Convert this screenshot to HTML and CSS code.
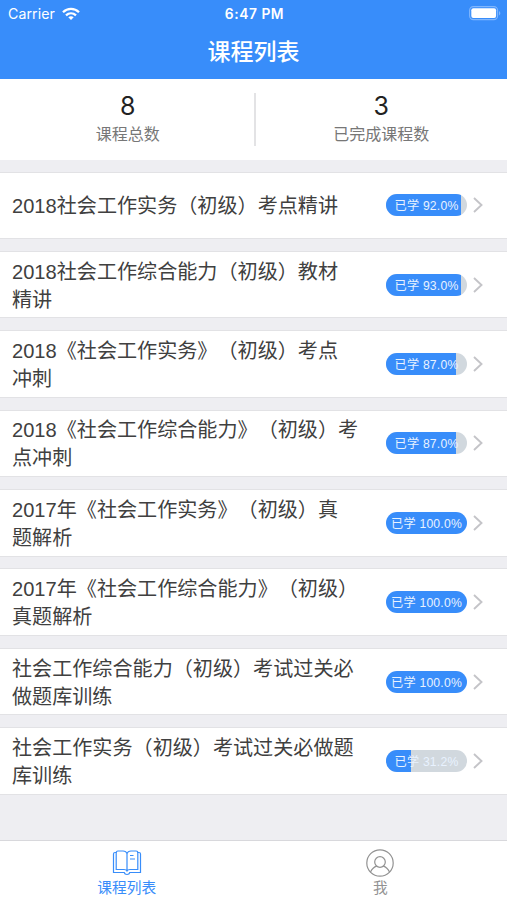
FILE: index.html
```html
<!DOCTYPE html>
<html lang="zh-CN">
<head>
<meta charset="utf-8">
<title>课程列表</title>
<link rel="stylesheet" href="styles.css">
</head>
<body>
<div class="app">
  <header class="header">
    <div class="status">
      <div class="carrier"><span>Carrier</span>
        <svg width="18" height="14" viewBox="0 0 18 14" fill="none" stroke="#fff" stroke-width="2.3"><path d="M1 5.2C5.5.8 12.500.8 17 5.200M4 8.300C6.900 5.600 11.100 5.600 14 8.300"/><path d="M6.300 10.300C7.900 8.900 10.100 8.900 11.700 10.300L9 13Z" fill="#fff" stroke="none"/></svg>
      </div>
      <div class="time">6:47 PM</div>
      <svg class="battery" width="32" height="15" viewBox="0 0 32 15"><rect x=".6" y=".6" width="28" height="13" rx="3.800" fill="none" stroke="#80b6fd" stroke-width="1.100"/><rect x="2.300" y="2.300" width="24.800" height="9.600" rx="2" fill="#fff"/><path d="M30 5v4.500c1.800-.7 1.800-3.800 0-4.500Z" fill="#80b6fd"/></svg>
    </div>
    <h1 class="heading">课程列表</h1>
  </header>
  <section class="stats">
    <div class="stat"><span class="number">8</span><span class="label">课程总数</span></div>
    <div class="stat"><span class="number">3</span><span class="label">已完成课程数</span></div>
  </section>
  <main class="list">
    <article class="card"><h2 class="name">2018社会工作实务（初级）考点精讲</h2><div class="pill"><i class="fill" style="width:92%"></i><span class="learned">已学 92.0%</span></div><svg class="arrow" viewBox="0 0 10 16"><path d="M1 1l7.500 7L1 15"/></svg></article>
    <article class="card"><h2 class="name">2018社会工作综合能力（初级）教材<br>精讲</h2><div class="pill"><i class="fill" style="width:93%"></i><span class="learned">已学 93.0%</span></div><svg class="arrow" viewBox="0 0 10 16"><path d="M1 1l7.500 7L1 15"/></svg></article>
    <article class="card"><h2 class="name">2018《社会工作实务》（初级）考点<br>冲刺</h2><div class="pill"><i class="fill" style="width:87%"></i><span class="learned">已学 87.0%</span></div><svg class="arrow" viewBox="0 0 10 16"><path d="M1 1l7.500 7L1 15"/></svg></article>
    <article class="card"><h2 class="name">2018《社会工作综合能力》（初级）考<br>点冲刺</h2><div class="pill"><i class="fill" style="width:87%"></i><span class="learned">已学 87.0%</span></div><svg class="arrow" viewBox="0 0 10 16"><path d="M1 1l7.500 7L1 15"/></svg></article>
    <article class="card"><h2 class="name">2017年《社会工作实务》（初级）真<br>题解析</h2><div class="pill"><i class="fill" style="width:100%"></i><span class="learned">已学 100.0%</span></div><svg class="arrow" viewBox="0 0 10 16"><path d="M1 1l7.500 7L1 15"/></svg></article>
    <article class="card"><h2 class="name">2017年《社会工作综合能力》（初级）<br>真题解析</h2><div class="pill"><i class="fill" style="width:100%"></i><span class="learned">已学 100.0%</span></div><svg class="arrow" viewBox="0 0 10 16"><path d="M1 1l7.500 7L1 15"/></svg></article>
    <article class="card"><h2 class="name">社会工作综合能力（初级）考试过关必<br>做题库训练</h2><div class="pill"><i class="fill" style="width:100%"></i><span class="learned">已学 100.0%</span></div><svg class="arrow" viewBox="0 0 10 16"><path d="M1 1l7.500 7L1 15"/></svg></article>
    <article class="card"><h2 class="name">社会工作实务（初级）考试过关必做题<br>库训练</h2><div class="pill"><i class="fill" style="width:31.2%"></i><span class="learned">已学 31.2%</span></div><svg class="arrow" viewBox="0 0 10 16"><path d="M1 1l7.500 7L1 15"/></svg></article>
  </main>
  <nav class="tabs">
    <a class="tab active">
      <svg width="30" height="28" viewBox="0 0 30 28" fill="none" stroke="currentColor" stroke-width="1.200"><path d="M15 4.500C14.300 2.500 13 2 11 2H6Q4.200 2 4.200 4V20.500H12Q14.200 20.500 15 22Q15.800 20.500 18 20.500H25.800V4Q25.800 2 24 2H19C17 2 15.700 2.500 15 4.500ZM15 4.500V22"/><path d="M4.200 3.500H3Q1.500 3.500 1.500 5V23.500H12.200Q12.700 25.500 15 25.500T17.800 23.500H28.500V5Q28.500 3.500 27 3.500H25.800M18 6.500h3.500M18 10h5"/></svg>
      <span>课程列表</span>
    </a>
    <a class="tab">
      <svg width="30" height="28" viewBox="0 0 30 28" fill="none" stroke="currentColor" stroke-width="1.200"><circle cx="15" cy="14" r="13.200"/><circle cx="15" cy="13" r="5.300"/><path d="M5.500 23C7 19.800 9 18 11.800 17.200M18.200 17.200C21 18 23 19.800 24.500 23"/></svg>
      <span>我</span>
    </a>
  </nav>
</div>
</body>
</html>
```
FILE: styles.css
```css
* { box-sizing: border-box; }
body { margin: 0; font-family: "Liberation Sans", "Noto Sans CJK SC", sans-serif; background: #eeeef2; }
.app { height: 900px; display: flex; flex-direction: column; overflow: hidden; }
.header { height: 79px; flex: none; background: #388dfa; color: #fff; }
.status { height: 27px; padding: 0 6px 0 8px; display: grid; grid-template-columns: 1fr auto 1fr; align-items: center; font-family: Inter, sans-serif; font-size: 14.2px; }
.carrier { display: flex; align-items: center; gap: 7px; letter-spacing: .05px; }
.time { font-size: 13.8px; font-weight: 600; letter-spacing: .55px; }
.battery { justify-self: end; }
.heading { margin: 0; font-size: 23px; line-height: 51px; font-weight: 500; text-align: center; }
.stats { height: 81px; flex: none; display: flex; background: #fff; padding: 14px 0; }
.stat { flex: 1; display: flex; flex-direction: column; align-items: center; }
.stat:first-child { padding-left: 2px; }
.stat + .stat { border-left: 2px solid #e3e3e5; }
.number { font-family: Inter, sans-serif; font-size: 25px; line-height: 26px; color: #222; }
.label { font-size: 16px; line-height: 24px; margin-top: 4px; color: #777; }
.list { flex: 1; padding-top: 11.500px; display: flex; flex-direction: column; gap: 11.900px; }
.card { height: 67.500px; flex: none; display: flex; align-items: center; padding: 0 24px 0 12px; background: #fff; border: solid #e2e2e5; border-width: 1px 0; }
.name { margin: 0; padding-top: 2px; width: 374px; font-size: 20.100px; line-height: 28px; font-weight: 400; color: #404040; white-space: nowrap; text-spacing-trim: space-all; }
.pill { width: 81px; height: 22px; flex: none; display: grid; border-radius: 11px; overflow: hidden; background: #d1d8de; }
.fill, .learned { grid-area: 1 / 1; }
.fill { background: #388dfa; }
.learned { padding-top: 1px; font-size: 12.200px; letter-spacing: .2px; line-height: 22px; text-align: center; color: #e8f2ff; white-space: nowrap; }
.arrow { width: 10px; height: 16px; margin-left: 6px; flex: none; fill: none; stroke: #c4c4c8; stroke-width: 1.900; }
.tabs { height: 60px; flex: none; display: flex; background: #fff; border-top: 1px solid #d8d8dc; }
.tab { flex: 1; display: flex; flex-direction: column; align-items: center; padding-top: 8px; font-size: 14.700px; line-height: 20px; color: #929292; }
.tab.active { color: #388dfa; }
.tab span { margin-top: 1px; }
```
